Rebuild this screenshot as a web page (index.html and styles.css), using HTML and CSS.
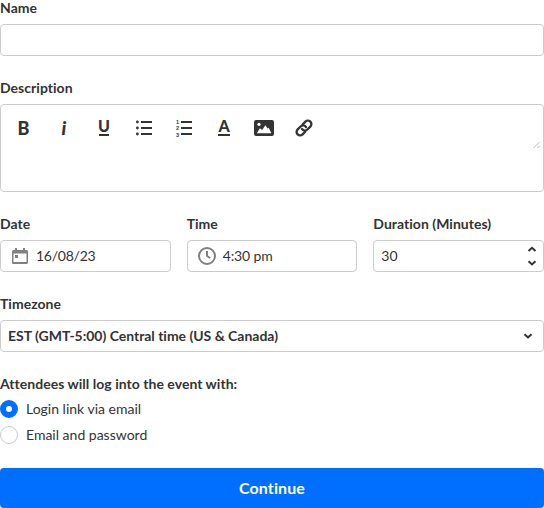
FILE: index.html
```html
<!DOCTYPE html>
<html lang="en">
<head>
<meta charset="utf-8">
<title>Event details</title>
<link rel="stylesheet" href="styles.css">
</head>
<body>
<form class="form">
  <div class="field">
    <div class="label">Name</div>
    <div class="control"></div>
  </div>
  <div class="field">
    <div class="label">Description</div>
    <div class="editor">
      <div class="toolbar">
        <svg class="tool" viewBox="0 0 40 40"><text class="glyph bold" x="19.6" y="26.7">B</text></svg>
        <svg class="tool" viewBox="0 0 40 40"><text class="glyph italic" x="17.6" y="26.8">i</text></svg>
        <svg class="tool" viewBox="0 0 40 40"><text class="glyph under" x="20" y="24">U</text><path class="fill" d="M15 26h10v2H15z"/></svg>
        <svg class="tool" viewBox="0 0 40 40"><path class="line" d="M17 14h11M17 20h11M17 26h11"/><g class="fill"><circle cx="13.4" cy="14" r="1.4"/><circle cx="13.4" cy="20" r="1.4"/><circle cx="13.4" cy="26" r="1.4"/></g></svg>
        <svg class="tool" viewBox="0 0 40 40"><path class="line" d="M17 14h11M17 20h11M17 26h11"/><text class="digit" x="12" y="15.7">1</text><text class="digit" x="12" y="22.1">2</text><text class="digit" x="12" y="28.5">3</text></svg>
        <svg class="tool" viewBox="0 0 40 40"><text class="glyph under" x="20" y="24">A</text><path class="fill" d="M14 26h12v2H14z"/></svg>
        <svg class="tool" viewBox="0 0 40 40"><rect class="fill" x="10" y="12" width="20" height="16" rx="2"/><circle class="hole" cx="15" cy="16.3" r="1.6"/><path class="hole" d="M12.800 25.200l3.100-5 2.200 1.800 3.300-4.800 2.200 3.300 1.100-.8 2.700 5.500z"/></svg>
        <svg class="tool" viewBox="0 0 40 40"><g transform="rotate(-45 20 20)" class="link"><path d="M18.200 23.500h-3.700a3.500 3.500 0 0 1 0-7h4.200a3.500 3.500 0 0 1 3.400 4.300"/><path d="M21.800 16.500h3.700a3.500 3.500 0 0 1 0 7h-4.200a3.500 3.500 0 0 1-3.400-4.300"/></g></svg>
      </div>
      <svg class="grip" viewBox="0 0 8 8"><path d="M.5 7l6-6M4.500 7l2-2"/></svg>
    </div>
  </div>
  <div class="row">
    <div class="field">
      <div class="label">Date</div>
      <div class="control date">
        <svg class="calendar" viewBox="0 0 16 16"><path fill-rule="evenodd" d="M3 0h2v2h6V0h2v2h1.500A1.500 1.500 0 0 1 16 3.500V14.500A1.500 1.500 0 0 1 14.500 16H1.500A1.500 1.500 0 0 1 0 14.500V3.500A1.500 1.500 0 0 1 1.500 2H3zM1.500 5.500v8.500h13V5.500z"/><path d="M3 7h3v3H3z"/></svg>
        <span>16/08/23</span>
      </div>
    </div>
    <div class="field">
      <div class="label">Time</div>
      <div class="control time">
        <svg class="clock" viewBox="0 0 18 18"><circle cx="9" cy="9" r="8"/><path d="M9 4v5l3.200 2"/></svg>
        <span>4:30 pm</span>
      </div>
    </div>
    <div class="field">
      <div class="label">Duration (Minutes)</div>
      <div class="control number">
        <span>30</span>
        <svg class="stepper" viewBox="0 0 10 20"><path d="M1.500 5L5 1.800 8.500 5M1.500 15.200L5 18.400l3.500-3.200"/></svg>
      </div>
    </div>
  </div>
  <div class="field">
    <div class="label">Timezone</div>
    <div class="control select">
      <span>EST (GMT-5:00) Central time (US &amp; Canada)</span>
      <svg class="chevron" viewBox="0 0 10 6"><path d="M1.500 1.300L5 4.500l3.500-3.200"/></svg>
    </div>
  </div>
  <div class="field">
    <div class="label">Attendees will log into the event with:</div>
    <div class="options">
      <div class="option"><span class="radio checked"></span><span>Login link via email</span></div>
      <div class="option"><span class="radio"></span><span>Email and password</span></div>
    </div>
  </div>
  <button class="submit" type="button">Continue</button>
</form>
</body>
</html>
```
FILE: styles.css
```css
* { box-sizing: border-box; }
body {
  margin: 0;
  background: #fff;
  color: #333;
  font: 14px/16px Lato, sans-serif;
  font-variant-ligatures: none;
}
svg { display: block; flex: none; }
.form { display: flex; flex-direction: column; gap: 24px; width: 544px; }
.field { display: flex; flex-direction: column; gap: 8px; }
.label { font-weight: 700; height: 16px; white-space: nowrap; letter-spacing: .03px; }
.control {
  display: flex;
  align-items: center;
  height: 32px;
  padding: 0 7px;
  border: 1px solid #ccc;
  border-radius: 4px;
}
.editor {
  position: relative;
  height: 88px;
  padding: 3px;
  border: 1px solid #ccc;
  border-radius: 4px;
}
.toolbar { display: flex; }
.tool { width: 40px; height: 40px; }
.fill { fill: #333; }
.hole { fill: #fff; }
.line { stroke: #333; stroke-width: 2; fill: none; }
.link { stroke: #333; stroke-width: 2.3; fill: none; stroke-linecap: round; }
.glyph { fill: #333; font-family: Lato, sans-serif; font-weight: 900; }
.bold { font-size: 18px; text-anchor: middle; }
.italic { font-size: 19px; font-style: italic; }
.under { font-size: 16px; text-anchor: middle; }
.digit { fill: #333; font: 700 5.5px "Liberation Sans", sans-serif; }
.grip { position: absolute; right: 2px; top: 36px; width: 8px; height: 8px; }
.grip path { stroke: #bbb; stroke-width: 1; fill: none; }
.row { display: grid; grid-template-columns: repeat(3, 1fr); gap: 16px; }
.date { padding-left: 11px; gap: 8px; letter-spacing: -.25px; }
.calendar { width: 16px; height: 16px; fill: #808080; }
.time { padding-left: 10px; gap: 7px; letter-spacing: -.1px; }
.clock { width: 18px; height: 18px; }
.clock circle, .clock path { fill: none; stroke: #808080; stroke-width: 2; }
.number, .select { justify-content: space-between; }
.number { padding-right: 6px; }
.stepper { width: 10px; height: 20px; }
.chevron { width: 10px; height: 6px; margin-right: 3px; }
.stepper path, .chevron path { fill: none; stroke: #333; stroke-width: 2; }
.select { font-weight: 700; letter-spacing: -.025px; }
.options { display: flex; flex-direction: column; gap: 8px; }
.option { display: flex; align-items: center; gap: 8px; height: 18px; }
.radio { width: 18px; height: 18px; border: 1px solid #ccc; border-radius: 50%; }
.checked { border: 6px solid #006eff; }
.submit {
  height: 40px;
  padding: 0;
  border: 0;
  border-radius: 4px;
  background: #006eff;
  color: #fff;
  font: 700 16px/20px Lato, sans-serif;
  font-variant-ligatures: none;
  letter-spacing: .1px;
}
```
